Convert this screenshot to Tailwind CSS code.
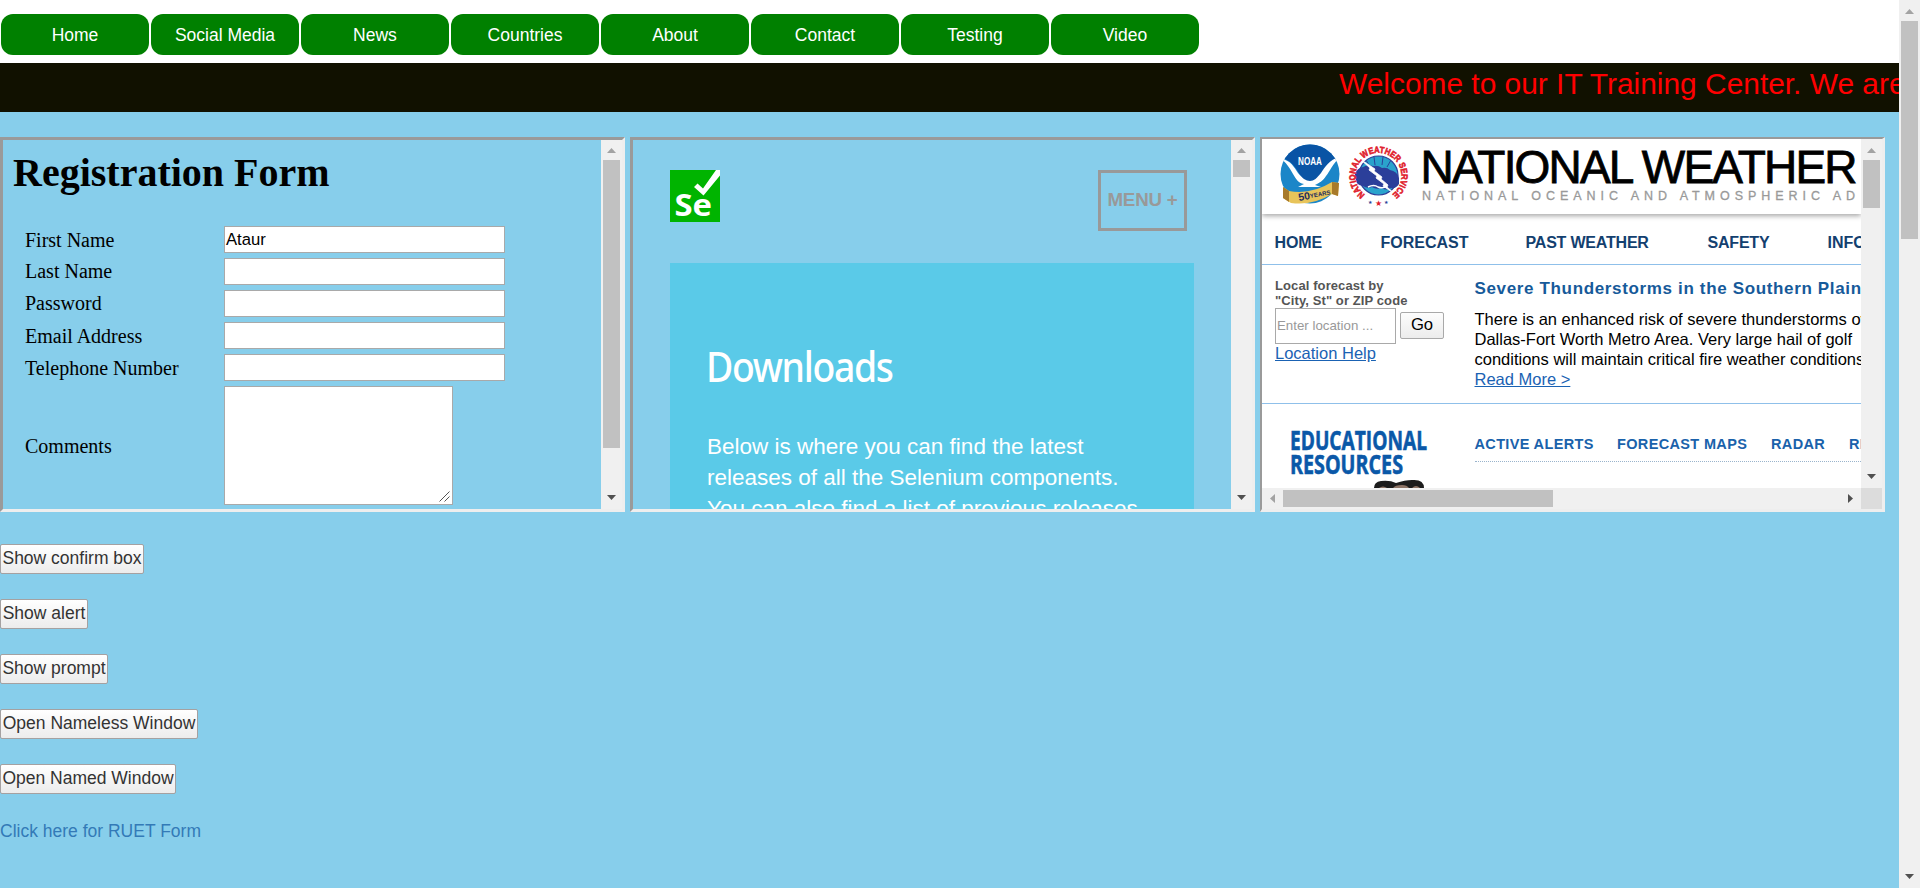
<!DOCTYPE html>
<html lang="en">
<head>
<meta charset="utf-8">
<title>IT Training Center</title>
<script src="https://cdn.jsdelivr.net/npm/@tailwindcss/browser@4"></script>
</head>
<body class="font-['Liberation_Sans',Arial,sans-serif] overflow-hidden">
<div class="flex w-[1920px] h-[888px] bg-[#87ceeb]">
  <main class="flex flex-col w-[1899px] h-full overflow-hidden">
    <nav class="flex gap-[2px] bg-white pt-[14px] pl-px h-[63px] text-white text-[17.5px] leading-[42px] text-center">
      <a class="w-[148px] h-[41px] rounded-[12px] bg-[#008000]">Home</a>
      <a class="w-[148px] h-[41px] rounded-[12px] bg-[#008000]">Social Media</a>
      <a class="w-[148px] h-[41px] rounded-[12px] bg-[#008000]">News</a>
      <a class="w-[148px] h-[41px] rounded-[12px] bg-[#008000]">Countries</a>
      <a class="w-[148px] h-[41px] rounded-[12px] bg-[#008000]">About</a>
      <a class="w-[148px] h-[41px] rounded-[12px] bg-[#008000]">Contact</a>
      <a class="w-[148px] h-[41px] rounded-[12px] bg-[#008000]">Testing</a>
      <a class="w-[148px] h-[41px] rounded-[12px] bg-[#008000]">Video</a>
    </nav>
    <div class="h-[49px] bg-[#111100] text-[#ff0000] text-[29.9px] leading-[42px] pl-[1339px] whitespace-nowrap overflow-hidden">Welcome to our IT Training Center. We are</div>

    <div class="flex gap-[5px] mt-[25px] h-[375px]">
      <!-- registration frame -->
      <section class="flex w-[625px] h-[375px] border-[3px] border-t-[#9a9a9a] border-l-[#9a9a9a] border-r-[#eeeeee] border-b-[#eeeeee] overflow-hidden">
        <div class="w-[599px] h-full overflow-hidden pl-[10px] text-black font-['Liberation_Serif',serif]">
          <h1 class="text-[40px] leading-[46px] font-bold mt-[10px]">Registration Form</h1>
          <div class="mt-[30px] ml-[12px] flex flex-col gap-[5px] text-[20px] leading-[27px]">
            <div class="flex h-[27px]"><label class="w-[199px] leading-[28px]">First Name</label><div class="w-[281px] h-[27px] bg-white border border-[#a9a9a9] pl-px font-['Liberation_Sans',Arial,sans-serif] text-[16.67px] leading-[25px]">Ataur</div></div>
            <div class="flex h-[27px]"><label class="w-[199px]">Last Name</label><div class="w-[281px] h-[27px] bg-white border border-[#a9a9a9]"></div></div>
            <div class="flex h-[27px]"><label class="w-[199px]">Password</label><div class="w-[281px] h-[27px] bg-white border border-[#a9a9a9]"></div></div>
            <div class="flex h-[27px]"><label class="w-[199px] leading-[28px]">Email Address</label><div class="w-[281px] h-[27px] bg-white border border-[#a9a9a9]"></div></div>
            <div class="flex h-[27px]"><label class="w-[199px] leading-[28px]">Telephone Number</label><div class="w-[281px] h-[27px] bg-white border border-[#a9a9a9]"></div></div>
            <div class="flex h-[119px]"><label class="w-[199px] leading-[120px]">Comments</label>
              <div class="w-[229px] h-[119px] bg-white border border-[#a9a9a9] flex items-end justify-end p-[2px]">
                <svg width="11" height="11" viewBox="0 0 11 11" stroke="#555" stroke-width="1" fill="none"><path d="M.5 10.500L10.500 .5M5.500 10.500L10.500 5.500"/></svg>
              </div>
            </div>
          </div>
        </div>
        <div class="w-[21px] h-full bg-[#f0f0f0] flex flex-col items-center">
          <svg class="shrink-0" width="21" height="20" viewBox="0 0 21 20"><path d="M6 13l4.500-5 4.500 5z" fill="#a3a3a3"/></svg>
          <div class="w-[17px] h-[288px] bg-[#c1c1c1]"></div>
          <svg class="mt-auto shrink-0" width="21" height="20" viewBox="0 0 21 20"><path d="M6 6h9l-4.500 5z" fill="#505050"/></svg>
        </div>
      </section>

      <!-- downloads frame -->
      <section class="flex w-[625px] h-[375px] border-[3px] border-t-[#9a9a9a] border-l-[#9a9a9a] border-r-[#eeeeee] border-b-[#eeeeee] overflow-hidden">
        <div class="w-[598px] h-full overflow-hidden pl-[37px] pt-[30px]">
          <div class="flex h-[93px] w-[517px] justify-between items-start">
            <svg width="50" height="52" viewBox="0 0 50 52">
              <rect width="50" height="52" fill="#00b400"/>
              <path d="M24 17l3.500-3.500 5.500 5L46 0h4v5.500L33.500 25.500z" fill="#fff"/>
              <text x="4.500" y="46" font-family="Open Sans" font-weight="700" font-size="30.500" fill="#fff" textLength="37.500" lengthAdjust="spacingAndGlyphs">Se</text>
            </svg>
            <div class="w-[89px] h-[61px] border-[3px] border-[#999999] text-[#999999] text-[18.75px] tracking-[-0.2px] font-bold text-center leading-[54px] whitespace-nowrap">MENU +</div>
          </div>
          <div class="w-[524px] h-[300px] bg-[#5acae8] text-white pl-[36px] pt-[74px]">
            <h2 class="font-['Noto_Sans','Open_Sans',sans-serif] text-[42px] leading-[58px] tracking-[-1.5px] whitespace-nowrap font-medium origin-left scale-x-[0.89]">Downloads</h2>
            <p class="mt-[36px] ml-px text-[22.5px] leading-[31px] whitespace-nowrap">Below is where you can find the latest<br>releases of all the Selenium components.<br>You can also find a list of previous releases</p>
          </div>
        </div>
        <div class="w-[21px] h-full bg-[#f0f0f0] flex flex-col items-center">
          <svg class="shrink-0" width="21" height="20" viewBox="0 0 21 20"><path d="M6 13l4.500-5 4.500 5z" fill="#a3a3a3"/></svg>
          <div class="w-[17px] h-[17px] bg-[#c1c1c1]"></div>
          <svg class="mt-auto shrink-0" width="21" height="20" viewBox="0 0 21 20"><path d="M6 6h9l-4.500 5z" fill="#505050"/></svg>
        </div>
      </section>

      <!-- weather frame -->
      <section class="flex flex-col w-[625px] h-[375px] border-t-2 border-l-2 border-r-[3px] border-b-[3px] border-t-[#9a9a9a] border-l-[#9a9a9a] border-r-[#eeeeee] border-b-[#eeeeee] overflow-hidden">
        <div class="flex h-[349px]">
          <div class="w-[599px] h-[349px] bg-white overflow-hidden whitespace-nowrap">
            <header class="h-[75px] shadow-[0_2px_5px_rgba(0,0,0,0.35)] bg-white">
              <svg width="599" height="75" viewBox="1262 139 599 75" font-family="Liberation Sans">
                <defs>
                  <clipPath id="noaa"><circle cx="1310" cy="174" r="29.500"/></clipPath>
                  <clipPath id="disc"><circle cx="1378.500" cy="175.500" r="19.500"/></clipPath>
                  <path id="ring" d="M1365 194.500A23 23 0 1 1 1392 194.500"/>
                </defs>
                <g clip-path="url(#noaa)">
                  <rect x="1280" y="144" width="60" height="60" fill="#1b86c8"/>
                  <path d="M1280 144h60v13q-10 3-16 13-5 9-11 13h-6q-5-4-10-13-6-10-17-13z" fill="#0954a5"/>
                  <path d="M1279 158c12 2 15 9 19 15 4 5 8 8 12 8s7-3 11-8c4-6 8-13 20-17-8 7-11 15-15 20-3 5-7 7-11 9l6 2h-23l6-3c-6-1-8-5-11-10-4-7-7-12-14-16z" fill="#fff"/>
                </g>
                <text x="1298" y="165" font-size="10" font-weight="700" fill="#fff" textLength="24" lengthAdjust="spacingAndGlyphs">NOAA</text>
                <path d="M1283 187l6 4q22 4 43-9l7 1-1 13-6-2q-20 12-41 9l-8-5z" fill="#e8c45a"/>
                <path d="M1283 187l6 4v11l-6-4zM1332 182l7 1-1 13-6-2z" fill="#a87a2a"/>
                <text transform="translate(1299 201) rotate(-10)" font-size="10.500" font-weight="700" fill="#1d2c5e">50<tspan font-size="6" dy="-1">YEARS</tspan></text>
                <g clip-path="url(#disc)">
                  <rect x="1358" y="155" width="42" height="42" fill="#2aa3cc"/>
                  <path d="M1366 160l4 7M1374 157l1 8M1383 157l-1 8M1391 160l-4 7" stroke="#2b3f9a" stroke-width="1"/>
                </g>
                <circle cx="1378.500" cy="175.500" r="19.500" fill="none" stroke="#2b3f9a" stroke-width="1.200"/>
                <path d="M1355 174q2-6 8-7 5-3 10-1 5-1 9 2 5-1 8 2 7 1 9 8v6q-3 5-8 4-5 3-9 0-6 2-10-1-5 2-9-1-7-1-7-6-2-3-1-6z" fill="#2b3f9a"/>
                <path d="M1368 187q6-3 10 0 5 2 9-1" stroke="#fff" stroke-width="1.500" fill="none"/>
                <path d="M1360 159l15 10-1 2 8 6-1 2 7 6-1 2 8 7-12-8 1-2-8-6 1-2-8-6 1-2z" fill="#fff" stroke="#fff" stroke-width=".8"/>
                <text font-size="9" font-weight="700" fill="#e0202c" stroke="#e0202c" stroke-width=".6"><textPath href="#ring" textLength="115" lengthAdjust="spacingAndGlyphs">NATIONAL WEATHER SERVICE</textPath></text>
                <text x="1367.500" y="204" font-size="5" fill="#2b3f9a">★</text>
                <text x="1375" y="206" font-size="8" fill="#e0202c">★</text>
                <text x="1384" y="204" font-size="5" fill="#2b3f9a">★</text>
                <text x="1420.500" y="183" font-size="46" fill="#000" stroke="#000" stroke-width=".8" textLength="437">NATIONAL WEATHER</text>
                <text x="1422" y="199.500" font-size="12.500" fill="#999" stroke="#999" stroke-width=".3" textLength="433">NATIONAL OCEANIC AND ATMOSPHERIC AD</text>
              </svg>
            </header>
            <nav class="flex h-[51px] border-b border-[#8fc0ea] pl-[12.500px] text-[16px] font-bold leading-[57px] text-[#13406f]">
              <a class="w-[106px] shrink-0 tracking-[-0.1px]">HOME</a><a class="w-[145px] shrink-0">FORECAST</a><a class="w-[182px] shrink-0 tracking-[-0.2px]">PAST WEATHER</a><a class="w-[120px] shrink-0 tracking-[-0.2px]">SAFETY</a><a class="shrink-0">INFORMATION</a>
            </nav>
            <div class="flex h-[139px] border-b border-[#8fc0ea] pl-[13px]">
              <div class="w-[199.500px] shrink-0 pt-[13px]">
                <p class="text-[13px] font-bold leading-[15px] text-[#555555] tracking-[0.1px]">Local forecast by<br>"City, St" or ZIP code</p>
                <div class="flex gap-[4px]">
                  <div class="w-[121px] h-[36px] border border-[#a9a9a9] bg-white pl-px text-[13.300px] leading-[33px] text-[#999999]">Enter location ...</div>
                  <div class="w-[44px] h-[27px] mt-[4px] border border-[#a9a9a9] rounded-[2px] bg-linear-to-b from-[#fdfdfd] to-[#ececec] text-center text-[16.67px] leading-[24px] text-black">Go</div>
                </div>
                <a class="block text-[16.500px] leading-[19px] text-[#1a62b3] underline">Location Help</a>
              </div>
              <div class="pt-[12px]">
                <h3 class="text-[17px] font-bold leading-[23px] tracking-[0.65px] text-[#165a9a]">Severe Thunderstorms in the Southern Plains</h3>
                <p class="mt-[9px] text-[16.500px] leading-[20px] text-black">There is an enhanced risk of severe thunderstorms over the<br>Dallas-Fort Worth Metro Area. Very large hail of golf<br>conditions will maintain critical fire weather conditions<br><a class="text-[#1a62b3] underline">Read More &gt;</a></p>
              </div>
            </div>
            <div class="flex h-[84px] pl-[28px]">
              <svg class="shrink-0" width="184.500" height="84" viewBox="1290 404 184.500 84" font-family="Open Sans" font-weight="700" font-size="27" fill="#0a58a8" stroke="#0a58a8" stroke-width=".6">
                <text x="1290" y="450" textLength="137" lengthAdjust="spacingAndGlyphs">EDUCATIONAL</text>
                <text x="1290" y="474" textLength="113" lengthAdjust="spacingAndGlyphs">RESOURCES</text>
                <g stroke="none">
                  <path d="M1374 488q0-6 7-7 9-1 15 2 9-3 16-3 12-1 12 8z" fill="#1c1c1c"/>
                  <path d="M1379 488q4-3 8 0zM1393 488q2-3 9-3 5 0 7 3zM1412 488q4-4 8 0z" fill="#8d7466"/>
                </g>
              </svg>
              <div class="pt-[34px]">
                <div class="flex w-[400px] h-[24px] border-b border-dotted border-[#9ab4cc] text-[14.5px] font-bold leading-[12px] tracking-[0.35px] text-[#1a62ab]"><a class="w-[142.500px] shrink-0">ACTIVE ALERTS</a><a class="w-[154px] shrink-0">FORECAST MAPS</a><a class="w-[78px] shrink-0">RADAR</a><a class="shrink-0">RIVERS</a></div>
              </div>
            </div>
          </div>
          <div class="w-[21px] h-full bg-[#f0f0f0] flex flex-col items-center">
            <svg class="shrink-0" width="21" height="21" viewBox="0 0 21 21"><path d="M6 14l4.500-5 4.500 5z" fill="#a3a3a3"/></svg>
            <div class="w-[17px] h-[48px] bg-[#c1c1c1]"></div>
            <svg class="mt-auto shrink-0" width="21" height="20" viewBox="0 0 21 20"><path d="M6 6h9l-4.500 5z" fill="#505050"/></svg>
          </div>
        </div>
        <div class="flex h-[21px] bg-[#f0f0f0] items-center">
          <svg class="shrink-0" width="21" height="21" viewBox="0 0 21 21"><path d="M13 6v9l-5-4.500z" fill="#a3a3a3"/></svg>
          <div class="w-[270px] h-[17px] bg-[#c1c1c1]"></div>
          <svg class="ml-auto shrink-0" width="21" height="21" viewBox="0 0 21 21"><path d="M8 6v9l5-4.500z" fill="#505050"/></svg>
          <div class="w-[21px] h-[21px] bg-[#dcdcdc]"></div>
        </div>
      </section>
    </div>

    <div class="flex flex-col items-start gap-[25px] mt-[32px] text-[17.5px] leading-[26px] text-[#333333] whitespace-nowrap">
      <button class="w-[144px] h-[30px] pb-[2px] border border-[#a5a1a1] rounded-[2px] bg-linear-to-b from-white to-[#ececec]">Show confirm box</button>
      <button class="w-[88px] h-[30px] pb-[2px] border border-[#a5a1a1] rounded-[2px] bg-linear-to-b from-white to-[#ececec]">Show alert</button>
      <button class="w-[108px] h-[30px] pb-[2px] border border-[#a5a1a1] rounded-[2px] bg-linear-to-b from-white to-[#ececec]">Show prompt</button>
      <button class="w-[198px] h-[30px] pb-[2px] border border-[#a5a1a1] rounded-[2px] bg-linear-to-b from-white to-[#ececec]">Open Nameless Window</button>
      <button class="w-[176px] h-[30px] pb-[2px] border border-[#a5a1a1] rounded-[2px] bg-linear-to-b from-white to-[#ececec]">Open Named Window</button>
      <a class="text-[#337ab7] leading-[25px]">Click here for RUET Form</a>
    </div>
  </main>
  <div class="w-[21px] h-full bg-[#f0f0f0] flex flex-col items-center">
    <svg class="shrink-0" width="21" height="21" viewBox="0 0 21 21"><path d="M6 14l4.500-5 4.500 5z" fill="#a3a3a3"/></svg>
    <div class="w-[17px] h-[218px] bg-[#c1c1c1]"></div>
    <svg class="mt-auto shrink-0" width="21" height="21" viewBox="0 0 21 21"><path d="M6 7h9l-4.500 5z" fill="#505050"/></svg>
  </div>
</div>
</body>
</html>
